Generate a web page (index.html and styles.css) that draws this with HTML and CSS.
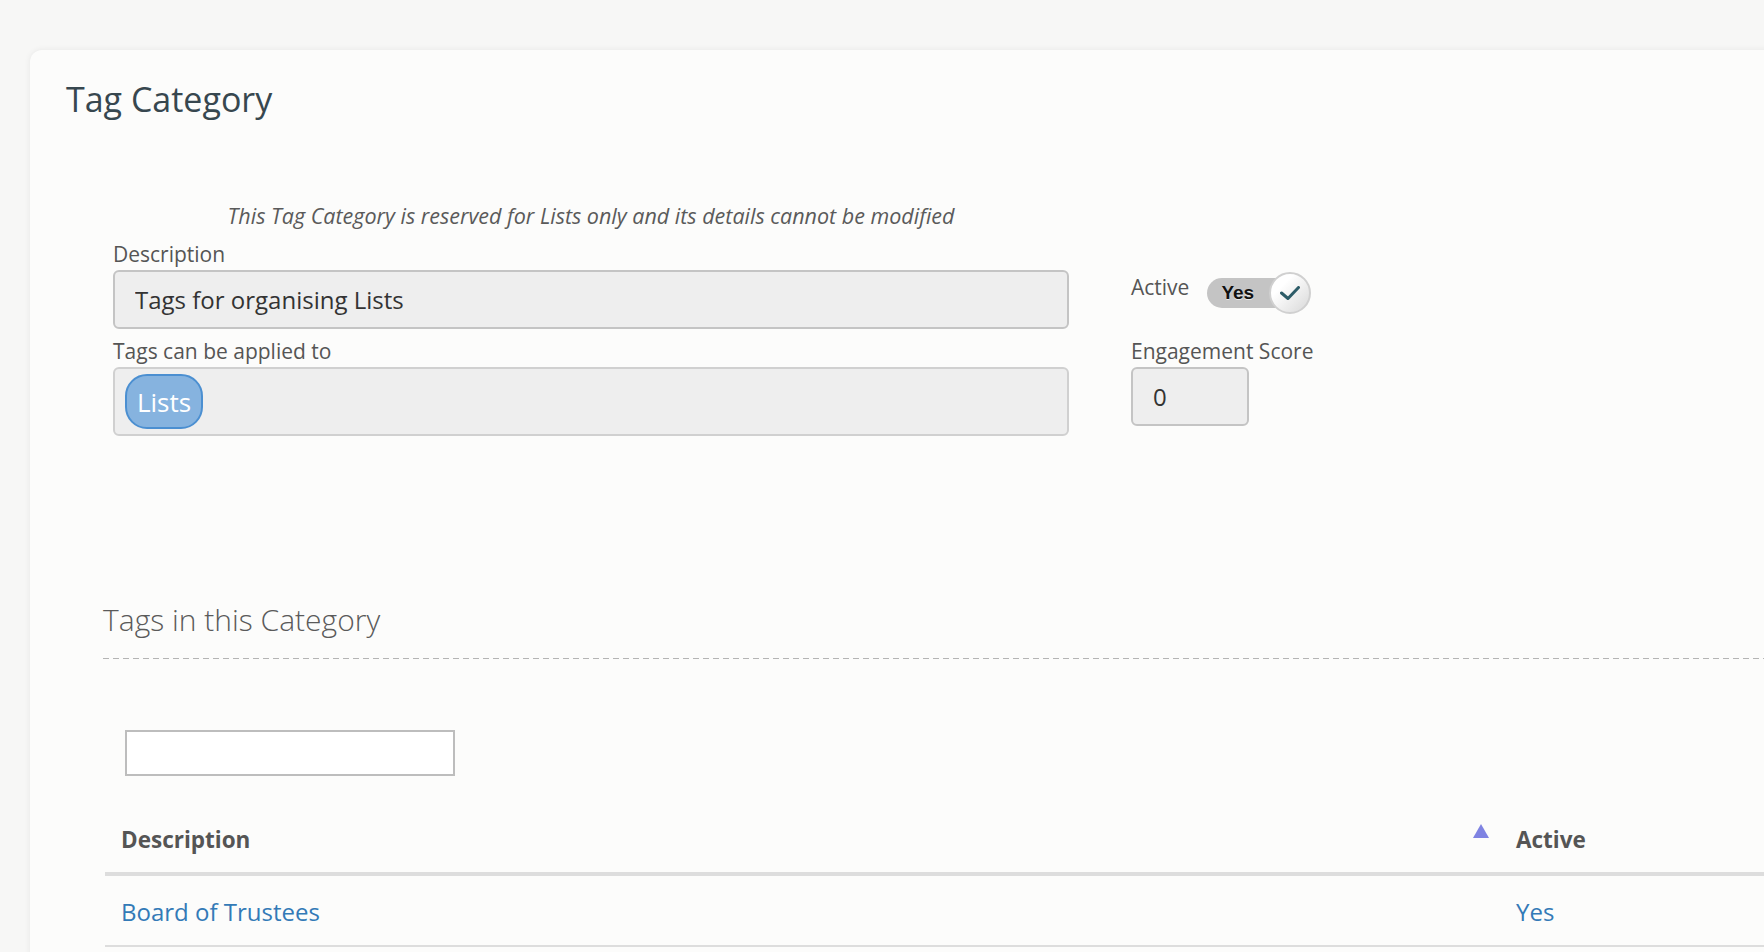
FILE: index.html
```html
<!DOCTYPE html>
<html lang="en">
<head>
  <meta charset="UTF-8" />
  <title>Tag Category</title>
  <link rel="stylesheet" href="styles.css">
</head>
<body>

  <div class="card">
    <h1 class="card-title">Tag Category</h1>

    <!-- Category details -->
    <div class="detail-form">
      <div class="main-col">
        <p class="notice">This Tag Category is reserved for Lists only and its details cannot be modified</p>
        <label class="field-label label-first">Description</label>
        <input class="field-input" type="text" value="Tags for organising Lists" readonly>
        <label class="field-label">Tags can be applied to</label>
        <div class="chip-field">
          <span class="chip">Lists</span>
        </div>
      </div>

      <div class="side-col">
        <div class="active-row">
          <span class="field-label active-label">Active</span>
          <div class="toggle">
            <span class="toggle-text">Yes</span>
            <span class="toggle-knob">
              <svg width="20" height="14" viewBox="0 0 20 14">
                <polyline points="1.5,7 8,12.5 18.5,1.5" fill="none" stroke="#2d5c68" stroke-width="3" stroke-linecap="round" stroke-linejoin="round"/>
              </svg>
            </span>
          </div>
        </div>
        <label class="field-label score-label">Engagement Score</label>
        <input class="field-input score-input" type="text" value="0" readonly>
      </div>
    </div>

    <!-- Tags list -->
    <div class="tags-section">
      <h2 class="section-title">Tags in this Category</h2>
      <input class="search-box" type="text">

      <table class="tags-table">
        <colgroup>
          <col class="col-desc">
          <col>
        </colgroup>
        <thead>
          <tr>
            <th>Description<span class="sort-arrow"></span></th>
            <th>Active</th>
          </tr>
        </thead>
        <tbody>
          <tr>
            <td><a href="#">Board of Trustees</a></td>
            <td><a href="#">Yes</a></td>
          </tr>
        </tbody>
      </table>
    </div>
  </div>

</body>
</html>
```

FILE: styles.css
```css
html, body {
  margin: 0;
  padding: 0;
  background: #f7f7f6;
  color: #555;
  font-family: 'Open Sans', 'Segoe UI', sans-serif;
  overflow: hidden;
}

.card {
  margin: 50px 0 0 30px;
  width: 1780px;
  min-height: 960px;
  box-sizing: border-box;
  padding: 29px 0 0 36px;
  background: #fcfcfb;
  border-radius: 12px;
  box-shadow: 0 0 6px rgba(0, 0, 0, 0.07);
}

.card-title {
  margin: 0;
  font-size: 34px;
  line-height: 40px;
  font-weight: 400;
  color: #37474f;
}

.detail-form {
  display: grid;
  grid-template-columns: 956px 220px;
  column-gap: 62px;
  margin: 85px 0 0 47px;
}

.notice {
  margin: 0;
  text-align: center;
  font-style: italic;
  font-size: 21.5px;
  line-height: 24px;
  color: #5a5a5a;
}

.field-label {
  display: block;
  margin-top: 10px;
  font-size: 21px;
  line-height: 24px;
  color: #555;
}

.label-first {
  margin-top: 14px;
}

.field-input {
  display: block;
  width: 100%;
  height: 59px;
  margin-top: 4px;
  box-sizing: border-box;
  padding: 0 20px;
  border: 2px solid #c4c4c4;
  border-radius: 6px;
  background: #eee;
  color: #333;
  font-family: 'Open Sans', 'Segoe UI', sans-serif;
  font-size: 24px;
}

.chip-field {
  display: flex;
  align-items: center;
  height: 69px;
  margin-top: 4px;
  box-sizing: border-box;
  padding: 0 10px;
  border: 2px solid #d0d0d0;
  border-radius: 6px;
  background: #eee;
}

.chip {
  display: inline-flex;
  align-items: center;
  justify-content: center;
  width: 78px;
  height: 55px;
  box-sizing: border-box;
  border: 2px solid #4b8fd1;
  border-radius: 22px;
  background: #86b3df;
  color: #fff;
  font-size: 26px;
}

.side-col {
  padding-top: 68px;
}

.active-row {
  display: flex;
  align-items: flex-start;
  height: 42px;
}

.active-label {
  margin-top: 3px;
}

.score-label {
  margin-top: 25px;
}

.toggle {
  position: relative;
  display: flex;
  align-items: center;
  width: 104px;
  height: 42px;
  margin-left: 18px;
}

.toggle::before {
  content: "";
  position: absolute;
  left: 0;
  top: 6px;
  width: 96px;
  height: 30px;
  border-radius: 15px;
  background: #c4c4c4;
}

.toggle-text {
  position: relative;
  margin-left: 14px;
  font-family: 'Liberation Sans', Arial, sans-serif;
  font-weight: bold;
  font-size: 19px;
  color: #111;
  text-shadow: 0 1px 0 rgba(255, 255, 255, 0.6);
}

.toggle-knob {
  position: absolute;
  right: 0;
  top: 0;
  display: flex;
  align-items: center;
  justify-content: center;
  width: 42px;
  height: 42px;
  box-sizing: border-box;
  border: 2px solid #d0d0d0;
  border-radius: 50%;
  background: linear-gradient(135deg, #fff 30%, #d8d8d8);
}

.score-input {
  width: 118px;
}

.tags-section {
  margin: 164px 0 0 37px;
}

.section-title {
  position: relative;
  margin: 0;
  padding-bottom: 18px;
  font-size: 30px;
  font-weight: 300;
  line-height: 40px;
  color: #5a5a5a;
}

.section-title::after {
  content: "";
  position: absolute;
  left: 0;
  right: 0;
  bottom: -1px;
  height: 1px;
  background: repeating-linear-gradient(to right, #b4b4b4 0 6px, transparent 6px 10px);
}

.search-box {
  display: block;
  width: 330px;
  height: 46px;
  margin: 72px 0 0 22px;
  box-sizing: border-box;
  border: 2px solid #bdbdbd;
  background: #fff;
}

.tags-table {
  width: 1700px;
  margin: 41px 0 0 2px;
  border-collapse: separate;
  border-spacing: 0;
  table-layout: fixed;
}

.col-desc {
  width: 1395px;
}

.tags-table th {
  position: relative;
  padding: 8px 16px 17px;
  border-bottom: 4px solid #ddd;
  text-align: left;
  font-size: 22.5px;
  font-weight: bold;
  line-height: 30px;
  color: #555;
}

.tags-table td {
  padding: 21px 16px 18px;
  border-bottom: 2px solid #ddd;
  font-size: 24px;
  line-height: 30px;
}

.tags-table a {
  color: #337ab7;
  text-decoration: none;
}

.sort-arrow {
  position: absolute;
  right: 11px;
  top: 7px;
  width: 0;
  height: 0;
  border-left: 8.5px solid transparent;
  border-right: 8.5px solid transparent;
  border-bottom: 14px solid #7f83e2;
  filter: blur(0.4px);
}
```
